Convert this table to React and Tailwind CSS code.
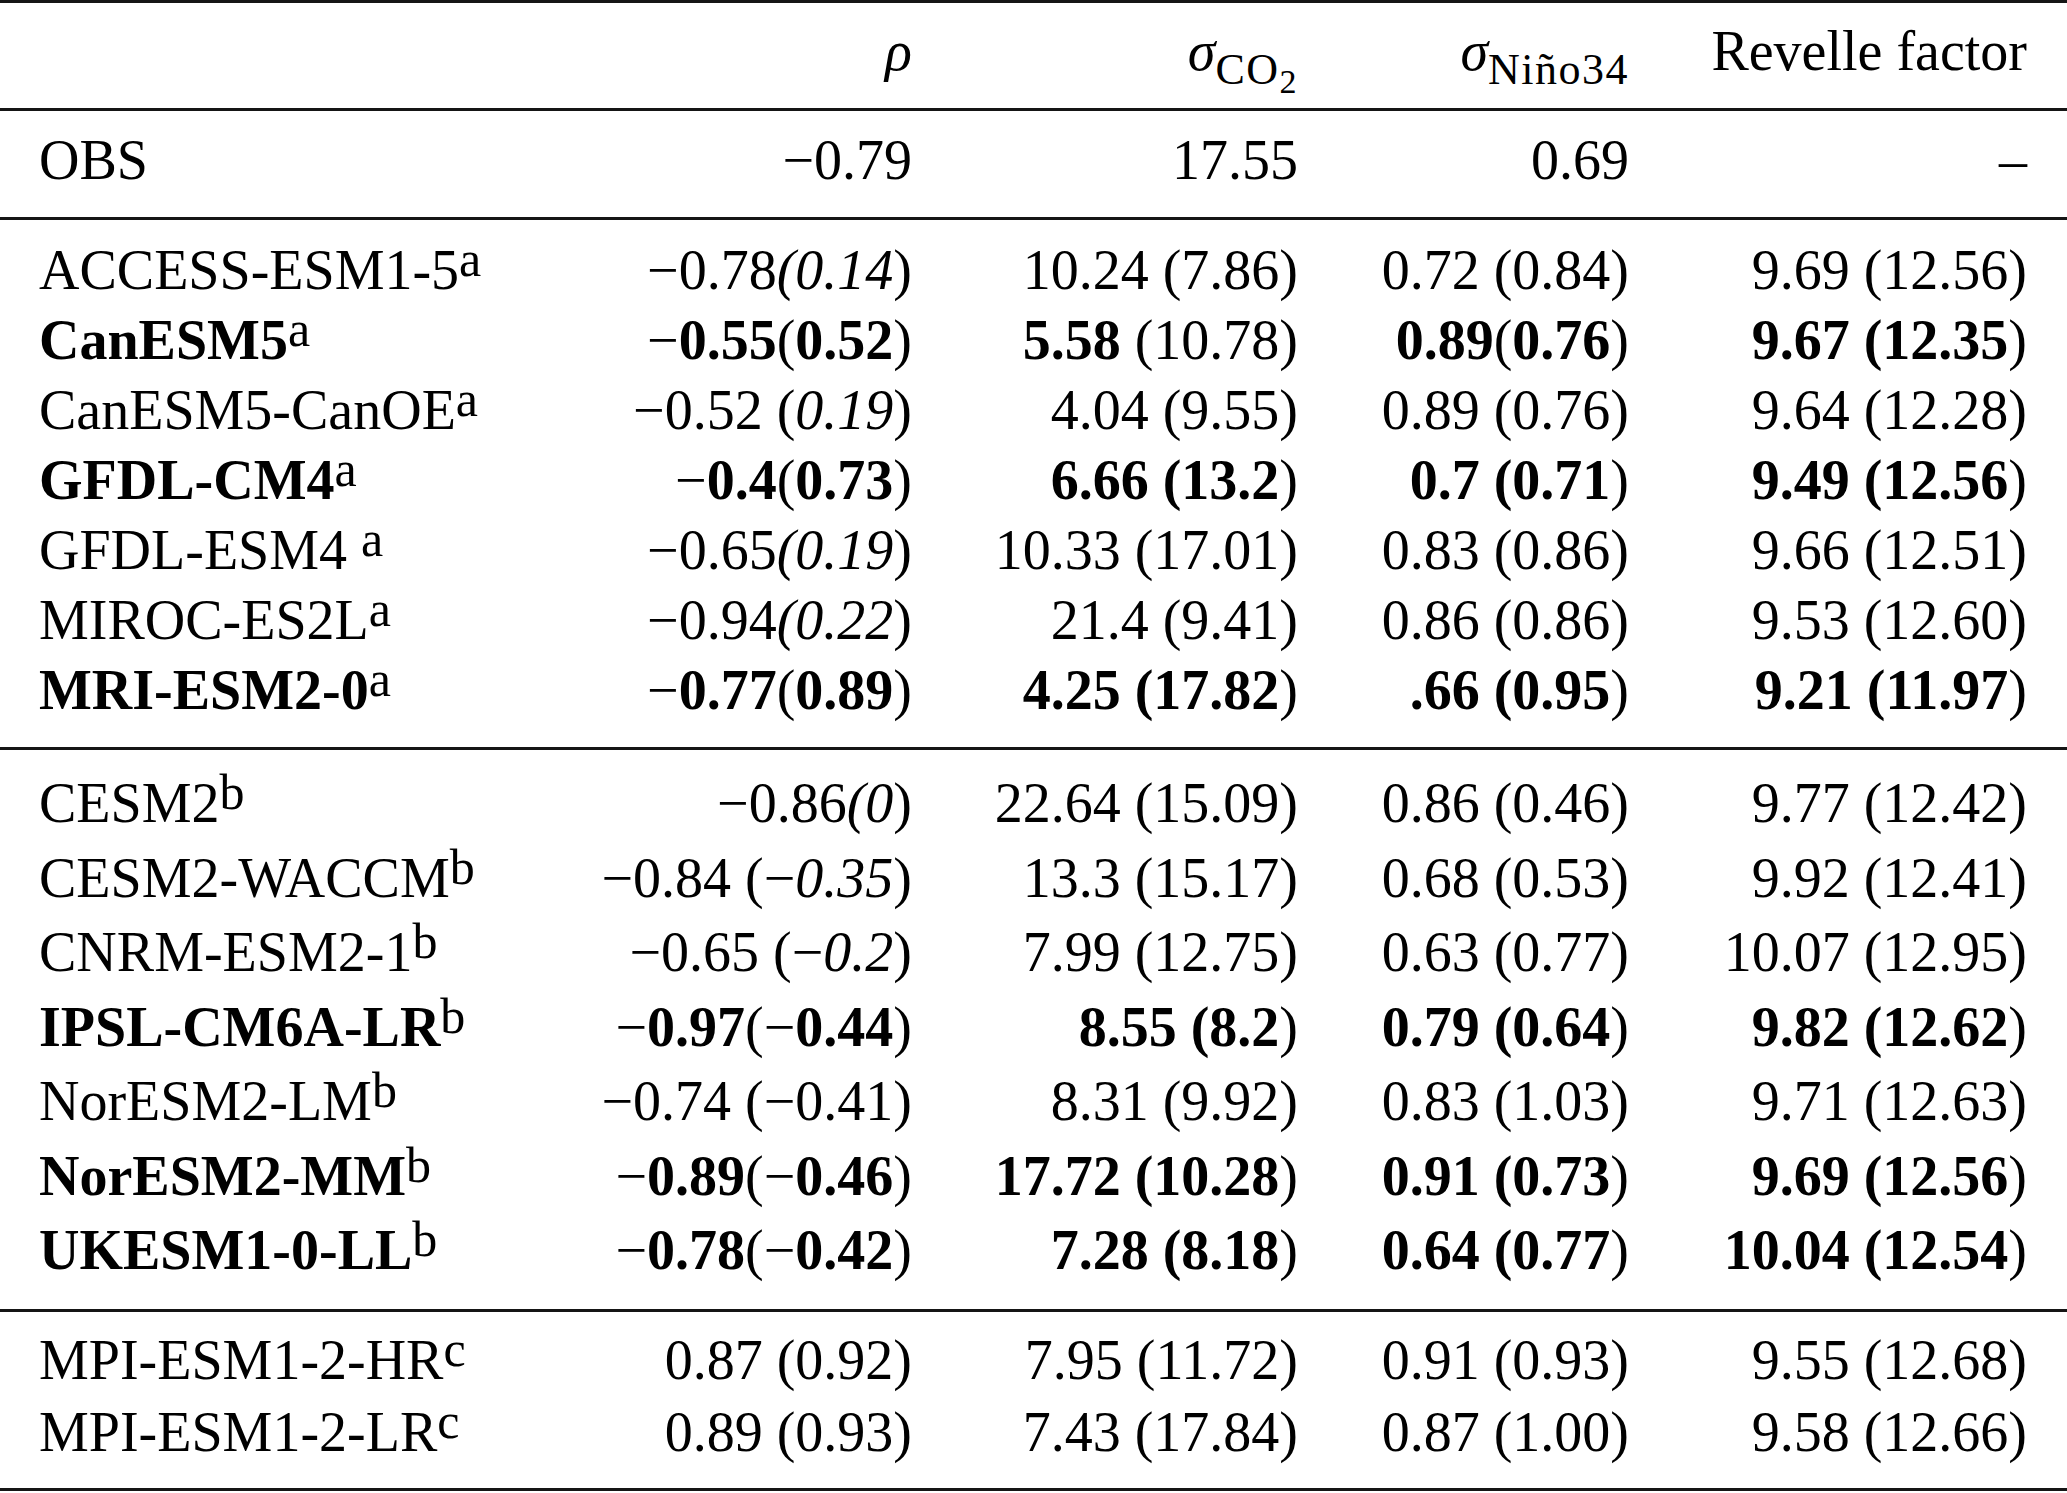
import React from 'react';

// --- small typographic helpers ---
const B = ({ children }) => <span className="font-bold">{children}</span>;
const I = ({ children }) => <span className="italic">{children}</span>;
const Sup = ({ children }) => (
  <span className="relative -top-[13px] text-[50px] leading-none font-normal">{children}</span>
);

// one table row: label + four right-aligned value cells
const Row = ({ h, cells }) => (
  <div className={`grid grid-cols-[500px_373px_386px_331px_398px] pl-[39px] pr-[40px] whitespace-nowrap ${h}`}>
    <div className="text-left">{cells[0]}</div>
    <div className="text-right">{cells[1]}</div>
    <div className="text-right">{cells[2]}</div>
    <div className="text-right">{cells[3]}</div>
    <div className="text-right">{cells[4]}</div>
  </div>
);

const M = '\u2212';

const GROUP_A = [
  [<>ACCESS-ESM1-5<Sup>a</Sup></>, <>{M}0.78<I>(0.14</I>)</>, '10.24 (7.86)', '0.72 (0.84)', '9.69 (12.56)'],
  [<><B>CanESM5</B><Sup>a</Sup></>, <>{M}<B>0.55</B>(<B>0.52</B>)</>, <><B>5.58</B> (10.78)</>, <><B>0.89</B>(<B>0.76</B>)</>, <><B>9.67 (12.35</B>)</>],
  [<>CanESM5-CanOE<Sup>a</Sup></>, <>{M}0.52 (<I>0.19</I>)</>, '4.04 (9.55)', '0.89 (0.76)', '9.64 (12.28)'],
  [<><B>GFDL-CM4</B><Sup>a</Sup></>, <>{M}<B>0.4</B>(<B>0.73</B>)</>, <><B>6.66 (13.2</B>)</>, <><B>0.7 (0.71</B>)</>, <><B>9.49 (12.56</B>)</>],
  [<>GFDL-ESM4 <Sup>a</Sup></>, <>{M}0.65<I>(0.19</I>)</>, '10.33 (17.01)', '0.83 (0.86)', '9.66 (12.51)'],
  [<>MIROC-ES2L<Sup>a</Sup></>, <>{M}0.94<I>(0.22</I>)</>, '21.4 (9.41)', '0.86 (0.86)', '9.53 (12.60)'],
  [<><B>MRI-ESM2-0</B><Sup>a</Sup></>, <>{M}<B>0.77</B>(<B>0.89</B>)</>, <><B>4.25 (17.82</B>)</>, <><B>.66 (0.95</B>)</>, <><B>9.21 (11.97</B>)</>],
];

const GROUP_B = [
  [<>CESM2<Sup>b</Sup></>, <>{M}0.86<I>(0</I>)</>, '22.64 (15.09)', '0.86 (0.46)', '9.77 (12.42)'],
  [<>CESM2-WACCM<Sup>b</Sup></>, <>{M}0.84 ({M}<I>0.35</I>)</>, '13.3 (15.17)', '0.68 (0.53)', '9.92 (12.41)'],
  [<>CNRM-ESM2-1<Sup>b</Sup></>, <>{M}0.65 ({M}<I>0.2</I>)</>, '7.99 (12.75)', '0.63 (0.77)', '10.07 (12.95)'],
  [<><B>IPSL-CM6A-LR</B><Sup>b</Sup></>, <>{M}<B>0.97</B>({M}<B>0.44</B>)</>, <><B>8.55 (8.2</B>)</>, <><B>0.79 (0.64</B>)</>, <><B>9.82 (12.62</B>)</>],
  [<>NorESM2-LM<Sup>b</Sup></>, <>{M}0.74 ({M}0.41)</>, '8.31 (9.92)', '0.83 (1.03)', '9.71 (12.63)'],
  [<><B>NorESM2-MM</B><Sup>b</Sup></>, <>{M}<B>0.89</B>({M}<B>0.46</B>)</>, <><B>17.72 (10.28</B>)</>, <><B>0.91 (0.73</B>)</>, <><B>9.69 (12.56</B>)</>],
  [<><B>UKESM1-0-LL</B><Sup>b</Sup></>, <>{M}<B>0.78</B>({M}<B>0.42</B>)</>, <><B>7.28 (8.18</B>)</>, <><B>0.64 (0.77</B>)</>, <><B>10.04 (12.54</B>)</>],
];

const GROUP_C = [
  [<>MPI-ESM1-2-HR<Sup>c</Sup></>, '0.87 (0.92)', '7.95 (11.72)', '0.91 (0.93)', '9.55 (12.68)'],
  [<>MPI-ESM1-2-LR<Sup>c</Sup></>, '0.89 (0.93)', '7.43 (17.84)', '0.87 (1.00)', '9.58 (12.66)'],
];

export default function App() {
  return (
    <div className="w-[2067px] bg-white text-black font-['Liberation_Serif',serif] text-[56px]">
      {/* header */}
      <div className="border-t-[3px] border-[#151515] pt-[13px] pb-[22px]">
        <Row
          h="h-[70px] leading-[70px]"
          cells={[
            '',
            <I>ρ</I>,
            <>
              <I>σ</I>
              <span className="relative top-[14px] text-[44px] leading-none tracking-[1.5px]">
                CO<span className="relative top-[9px] text-[34px] leading-none">2</span>
              </span>
            </>,
            <>
              <I>σ</I>
              <span className="relative top-[14px] text-[44px] leading-none tracking-[1.5px]">Niño34</span>
            </>,
            'Revelle factor',
          ]}
        />
      </div>

      {/* observations */}
      <div className="border-t-[3px] border-[#151515] pt-[14px] pb-[22px]">
        <Row h="h-[70px] leading-[70px]" cells={['OBS', `${M}0.79`, '17.55', '0.69', '–']} />
      </div>

      {/* group a */}
      <div className="border-t-[3px] border-[#151515] pt-[15px] pb-[22px]">
        {GROUP_A.map((r, i) => (
          <Row key={i} h="h-[70px] leading-[70px]" cells={r} />
        ))}
      </div>

      {/* group b */}
      <div className="border-t-[3px] border-[#151515] pt-[16px] pb-[21px]">
        {GROUP_B.map((r, i) => (
          <Row key={i} h="h-[74.5px] leading-[74.5px]" cells={r} />
        ))}
      </div>

      {/* group c */}
      <div className="border-y-[3px] border-[#151515] pt-[12px] pb-[20px]">
        {GROUP_C.map((r, i) => (
          <Row key={i} h="h-[72px] leading-[72px]" cells={r} />
        ))}
      </div>
    </div>
  );
}
